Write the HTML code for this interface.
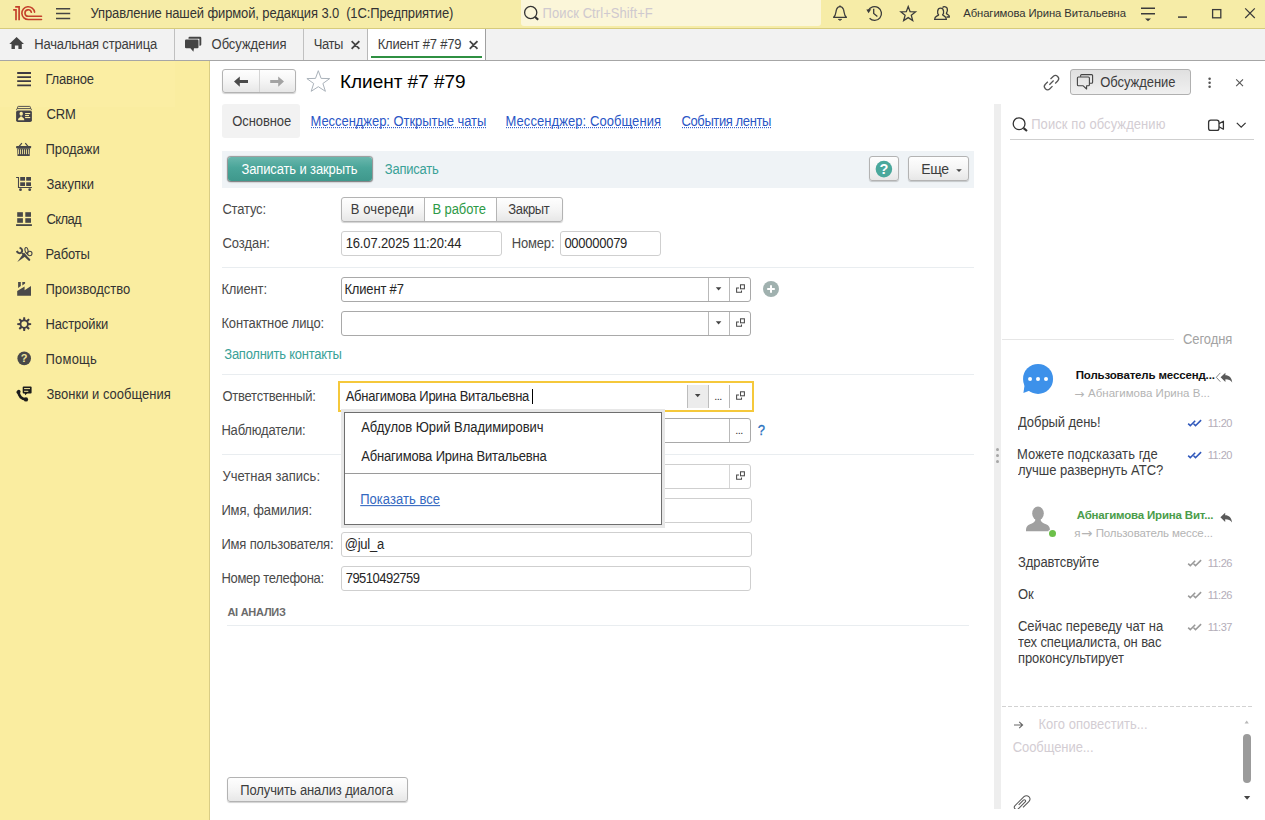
<!DOCTYPE html>
<html lang="ru">
<head>
<meta charset="utf-8">
<title>Клиент #7 #79</title>
<style>
*{box-sizing:border-box;margin:0;padding:0}
html,body{width:1265px;height:820px;overflow:hidden;background:#fff}
body{font-family:"Liberation Sans",sans-serif;font-size:13.5px;color:#333;position:relative}
.abs{position:absolute}
.t{position:absolute;white-space:nowrap}
svg{position:absolute;overflow:visible}
#top{position:absolute;left:0;top:0;width:1265px;height:29px;background:#f6eca7;border-bottom:1px solid #d6cb7c}
#search{position:absolute;left:521px;top:0;width:300px;height:26px;background:#fbf6d9;border-radius:0 0 3px 3px}
#tabs{position:absolute;left:0;top:29px;width:1265px;height:32px;background:#f2f2f2;border-bottom:1px solid #a6a6a6}
.sep{position:absolute;top:29px;width:1px;height:31px;background:#c0c0c0}
#side{position:absolute;left:0;top:61px;width:210px;height:759px;background:#faeda0;border-right:1px solid #d9cd85}
.inp{position:absolute;height:25px;border:1px solid #cfcfcf;border-radius:3px;background:#fff}
.inp.dk{border-color:#a9a9a9}
.hr{position:absolute;left:222px;width:752px;height:1px;background:#e9edf0}
.btn{position:absolute;border:1px solid #b3b3b3;border-radius:3px;background:linear-gradient(#fefefe,#f5f5f5 50%,#e7e7e7);box-shadow:0 1px 1px rgba(0,0,0,.18)}
.vl{position:absolute;width:1px;height:23px;background:#b9b9b9}
.dot{width:3px;height:3px;background:#a6a6a6;border-radius:1.5px}
.lnk{border-bottom:1px dotted #2a56c6;height:14px}
</style>
</head>
<body>
<div id="top"></div><div id="search"></div>
<div class="t" style="left:90.50px;top:6.00px;font-size:13px;line-height:15px;color:#333;letter-spacing:-0.112px;transform:scaleY(1.075);transform-origin:0 12px;">Управление нашей фирмой, редакция 3.0&nbsp; (1С:Предприятие)</div><div class="t" style="left:542.60px;top:6.00px;font-size:13px;line-height:15px;color:#cfc9cf;letter-spacing:0.068px;transform:scaleY(1.075);transform-origin:0 12px;">Поиск Ctrl+Shift+F</div><div class="t" style="left:963.20px;top:7.00px;font-size:11.3px;line-height:12px;color:#333;letter-spacing:-0.090px;">Абнагимова Ирина Витальевна</div>
<div id="tabs"></div>
<div class="sep" style="left:174px"></div>
<div class="sep" style="left:303px"></div>
<div class="abs" style="left:367px;top:29px;width:119px;height:31px;background:#fff;border-left:1px solid #b8b8b8;border-right:1px solid #a0a0a0"></div>
<div class="abs" style="left:371px;top:56px;width:111px;height:2px;background:#2f9042"></div>
<div class="t" style="left:34.20px;top:37.00px;font-size:13px;line-height:15px;color:#3d3d3d;letter-spacing:-0.162px;transform:scaleY(1.075);transform-origin:0 12px;">Начальная страница</div><div class="t" style="left:211.60px;top:37.00px;font-size:13px;line-height:15px;color:#3d3d3d;letter-spacing:-0.068px;transform:scaleY(1.075);transform-origin:0 12px;">Обсуждения</div><div class="t" style="left:313.70px;top:37.00px;font-size:13px;line-height:15px;color:#3d3d3d;letter-spacing:-0.388px;transform:scaleY(1.075);transform-origin:0 12px;">Чаты</div><div class="t" style="left:377.70px;top:37.00px;font-size:13px;line-height:15px;color:#3d3d3d;letter-spacing:-0.202px;transform:scaleY(1.075);transform-origin:0 12px;">Клиент #7 #79</div>
<div id="side"></div>
<div class="abs" style="left:0;top:61px;width:175px;height:46px;background:#fbeea3"></div>
<div class="t" style="left:45.50px;top:72.00px;font-size:13px;line-height:15px;color:#333;letter-spacing:-0.207px;transform:scaleY(1.075);transform-origin:0 12px;">Главное</div><div class="t" style="left:46.50px;top:107.00px;font-size:13px;line-height:15px;color:#333;letter-spacing:-0.138px;transform:scaleY(1.075);transform-origin:0 12px;">CRM</div><div class="t" style="left:45.50px;top:142.00px;font-size:13px;line-height:15px;color:#333;transform:scaleY(1.075);transform-origin:0 12px;">Продажи</div><div class="t" style="left:46.50px;top:177.00px;font-size:13px;line-height:15px;color:#333;letter-spacing:0.010px;transform:scaleY(1.075);transform-origin:0 12px;">Закупки</div><div class="t" style="left:46.50px;top:212.00px;font-size:13px;line-height:15px;color:#333;letter-spacing:-0.634px;transform:scaleY(1.075);transform-origin:0 12px;">Склад</div><div class="t" style="left:45.50px;top:247.00px;font-size:13px;line-height:15px;color:#333;letter-spacing:-0.163px;transform:scaleY(1.075);transform-origin:0 12px;">Работы</div><div class="t" style="left:45.50px;top:282.00px;font-size:13px;line-height:15px;color:#333;transform:scaleY(1.075);transform-origin:0 12px;">Производство</div><div class="t" style="left:45.50px;top:317.00px;font-size:13px;line-height:15px;color:#333;letter-spacing:-0.123px;transform:scaleY(1.075);transform-origin:0 12px;">Настройки</div><div class="t" style="left:45.50px;top:352.00px;font-size:13px;line-height:15px;color:#333;letter-spacing:0.213px;transform:scaleY(1.075);transform-origin:0 12px;">Помощь</div><div class="t" style="left:46.50px;top:387.00px;font-size:13px;line-height:15px;color:#333;transform:scaleY(1.075);transform-origin:0 12px;">Звонки и сообщения</div>

<div class="btn" style="left:222px;top:69px;width:74px;height:24px"></div>
<div class="abs" style="left:259px;top:70px;width:1px;height:22px;background:#d4d4d4"></div>
<div class="abs" style="left:222px;top:104px;width:78px;height:34px;background:#f2f2f2;border-radius:3px"></div>
<div class="abs" style="left:222px;top:151px;width:752px;height:37px;background:#eff3f6"></div>
<div class="abs" style="left:228px;top:157px;width:144px;height:24px;border-radius:3px;background:linear-gradient(#6ab7ad,#4aa599 45%,#3f988c);box-shadow:0 0 1px 0.5px rgba(80,80,80,.55),0 1px 2px rgba(0,0,0,.3)"></div>
<div class="btn" style="left:869px;top:156px;width:30px;height:25px"></div>
<div class="btn" style="left:908px;top:156px;width:61px;height:25px"></div>
<div class="btn" style="left:341px;top:197px;width:222px;height:25px"></div>
<div class="abs" style="left:424px;top:198px;width:73px;height:23px;background:#fff;border-left:1px solid #b5b5b5;border-right:1px solid #b5b5b5"></div>
<div class="inp" style="left:341px;top:231px;width:161px"></div>
<div class="inp" style="left:560px;top:231px;width:101px"></div>
<div class="hr" style="top:267px"></div>
<div class="inp dk" style="left:341px;top:277px;width:410px"></div>
<div class="vl" style="left:708px;top:278px"></div><div class="vl" style="left:729px;top:278px"></div>
<div class="inp dk" style="left:341px;top:311px;width:410px"></div>
<div class="vl" style="left:708px;top:312px"></div><div class="vl" style="left:729px;top:312px"></div>
<div class="hr" style="top:374px"></div>
<div class="abs" style="left:338px;top:381px;width:416px;height:31px;border:2px solid #f5c83b;background:#fff"></div>
<div class="abs" style="left:687px;top:385px;width:22px;height:23px;background:#ececec;border-left:1px solid #bdbdbd;border-right:1px solid #bdbdbd"></div>
<div class="vl" style="left:729px;top:385px;height:23px"></div>
<div class="abs" style="left:532px;top:389px;width:1px;height:15px;background:#000"></div>
<div class="inp dk" style="left:341px;top:418px;width:410px"></div>
<div class="vl" style="left:729px;top:419px"></div>
<div class="hr" style="top:454px"></div>
<div class="inp" style="left:341px;top:464px;width:410px"></div>
<div class="vl" style="left:729px;top:465px;background:#d6d6d6"></div>
<div class="inp" style="left:341px;top:498px;width:411px"></div>
<div class="inp" style="left:341px;top:532px;width:411px"></div>
<div class="inp" style="left:341px;top:566px;width:410px"></div>
<div class="abs" style="left:227px;top:625px;width:742px;height:1px;background:#e9edf0"></div>
<div class="btn" style="left:227px;top:777px;width:181px;height:25px"></div>
<div class="t" style="left:340.00px;top:71.00px;font-size:19px;line-height:21px;color:#000;letter-spacing:-0.030px;">Клиент #7 #79</div><div class="t" style="left:232.30px;top:114.00px;font-size:13px;line-height:15px;color:#3d3d3d;letter-spacing:-0.091px;transform:scaleY(1.075);transform-origin:0 12px;">Основное</div><div class="t lnk" style="left:310.50px;top:114.00px;font-size:13px;line-height:15px;color:#2a56c6;letter-spacing:-0.051px;transform:scaleY(1.075);transform-origin:0 12px;">Мессенджер: Открытые чаты</div><div class="t lnk" style="left:505.50px;top:114.00px;font-size:13px;line-height:15px;color:#2a56c6;letter-spacing:0.070px;transform:scaleY(1.075);transform-origin:0 12px;">Мессенджер: Сообщения</div><div class="t lnk" style="left:681.50px;top:114.00px;font-size:13px;line-height:15px;color:#2a56c6;letter-spacing:-0.394px;transform:scaleY(1.075);transform-origin:0 12px;">События ленты</div><div class="t" style="left:241.50px;top:162.00px;font-size:13px;line-height:15px;color:#fff;letter-spacing:-0.132px;transform:scaleY(1.075);transform-origin:0 12px;">Записать и закрыть</div><div class="t" style="left:384.80px;top:162.00px;font-size:13px;line-height:15px;color:#3aa197;letter-spacing:-0.226px;transform:scaleY(1.075);transform-origin:0 12px;">Записать</div><div class="t" style="left:921.30px;top:161.00px;font-size:14px;line-height:16px;color:#3d3d3d;letter-spacing:-0.400px;">Еще</div><div class="t" style="left:222.40px;top:202.00px;font-size:13px;line-height:15px;color:#4a4a4a;letter-spacing:-0.182px;transform:scaleY(1.075);transform-origin:0 12px;">Статус:</div><div class="t" style="left:350.70px;top:202.00px;font-size:13px;line-height:15px;color:#3d3d3d;letter-spacing:0.139px;transform:scaleY(1.075);transform-origin:0 12px;">В очереди</div><div class="t" style="left:432.50px;top:202.00px;font-size:13px;line-height:15px;color:#2e9a47;letter-spacing:-0.092px;transform:scaleY(1.075);transform-origin:0 12px;">В работе</div><div class="t" style="left:508.30px;top:202.00px;font-size:13px;line-height:15px;color:#3d3d3d;letter-spacing:-0.369px;transform:scaleY(1.075);transform-origin:0 12px;">Закрыт</div><div class="t" style="left:222.40px;top:236.00px;font-size:13px;line-height:15px;color:#4a4a4a;letter-spacing:-0.040px;transform:scaleY(1.075);transform-origin:0 12px;">Создан:</div><div class="t" style="left:345.70px;top:236.00px;font-size:13px;line-height:15px;color:#262626;letter-spacing:-0.138px;transform:scaleY(1.075);transform-origin:0 12px;">16.07.2025 11:20:44</div><div class="t" style="left:511.70px;top:236.00px;font-size:13px;line-height:15px;color:#4a4a4a;letter-spacing:-0.163px;transform:scaleY(1.075);transform-origin:0 12px;">Номер:</div><div class="t" style="left:564.40px;top:236.00px;font-size:13px;line-height:15px;color:#262626;letter-spacing:-0.267px;transform:scaleY(1.075);transform-origin:0 12px;">000000079</div><div class="t" style="left:221.40px;top:282.00px;font-size:13px;line-height:15px;color:#4a4a4a;letter-spacing:-0.131px;transform:scaleY(1.075);transform-origin:0 12px;">Клиент:</div><div class="t" style="left:344.40px;top:282.00px;font-size:13px;line-height:15px;color:#262626;letter-spacing:-0.166px;transform:scaleY(1.075);transform-origin:0 12px;">Клиент #7</div><div class="t" style="left:221.40px;top:316.00px;font-size:13px;line-height:15px;color:#4a4a4a;letter-spacing:-0.156px;transform:scaleY(1.075);transform-origin:0 12px;">Контактное лицо:</div><div class="t" style="left:224.30px;top:347.00px;font-size:13px;line-height:15px;color:#3aa197;letter-spacing:-0.253px;transform:scaleY(1.075);transform-origin:0 12px;">Заполнить контакты</div><div class="t" style="left:222.40px;top:389.00px;font-size:13px;line-height:15px;color:#4a4a4a;letter-spacing:-0.234px;transform:scaleY(1.075);transform-origin:0 12px;">Ответственный:</div><div class="t" style="left:345.70px;top:389.00px;font-size:13px;line-height:15px;color:#262626;letter-spacing:-0.246px;transform:scaleY(1.075);transform-origin:0 12px;">Абнагимова Ирина Витальевна</div><div class="t" style="left:221.40px;top:423.00px;font-size:13px;line-height:15px;color:#4a4a4a;letter-spacing:-0.174px;transform:scaleY(1.075);transform-origin:0 12px;">Наблюдатели:</div><div class="t" style="left:757.80px;top:423.00px;font-size:13px;line-height:15px;color:#2a72c0;transform:scaleY(1.075);transform-origin:0 12px;-webkit-text-stroke:0.3px #2a72c0;">?</div><div class="t" style="left:222.40px;top:469.00px;font-size:13px;line-height:15px;color:#4a4a4a;letter-spacing:0.028px;transform:scaleY(1.075);transform-origin:0 12px;">Учетная запись:</div><div class="t" style="left:221.40px;top:503.00px;font-size:13px;line-height:15px;color:#4a4a4a;letter-spacing:-0.130px;transform:scaleY(1.075);transform-origin:0 12px;">Имя, фамилия:</div><div class="t" style="left:221.40px;top:537.00px;font-size:13px;line-height:15px;color:#4a4a4a;letter-spacing:-0.166px;transform:scaleY(1.075);transform-origin:0 12px;">Имя пользователя:</div><div class="t" style="left:344.70px;top:537.00px;font-size:13px;line-height:15px;color:#262626;letter-spacing:-0.227px;transform:scaleY(1.075);transform-origin:0 12px;">@jul_a</div><div class="t" style="left:221.40px;top:571.00px;font-size:13px;line-height:15px;color:#4a4a4a;letter-spacing:-0.306px;transform:scaleY(1.075);transform-origin:0 12px;">Номер телефона:</div><div class="t" style="left:345.70px;top:571.00px;font-size:13px;line-height:15px;color:#262626;letter-spacing:-0.520px;transform:scaleY(1.075);transform-origin:0 12px;">79510492759</div><div class="t" style="left:227.40px;top:606.00px;font-size:11px;line-height:12px;color:#6b6b6b;letter-spacing:-0.256px;font-weight:bold;">AI АНАЛИЗ</div><div class="t" style="left:240.30px;top:783.00px;font-size:13px;line-height:15px;color:#3d3d3d;letter-spacing:-0.123px;transform:scaleY(1.075);transform-origin:0 12px;">Получить анализ диалога</div><div class="t" style="left:714.30px;top:390.00px;font-size:11px;line-height:12px;color:#333;letter-spacing:-0.556px;">...</div><div class="t" style="left:735.30px;top:424.00px;font-size:11px;line-height:12px;color:#333;letter-spacing:-0.556px;">...</div><div class="abs" style="left:344px;top:412px;width:318px;height:113px;background:#fff;border:1px solid #6e6e6e;box-shadow:0 0 0 3px #e7e7e7"></div>
<div class="abs" style="left:345px;top:473px;width:316px;height:1px;background:#9a9a9a"></div>
<div class="t" style="left:361.20px;top:420.00px;font-size:13px;line-height:15px;color:#262626;letter-spacing:-0.036px;transform:scaleY(1.075);transform-origin:0 12px;">Абдулов Юрий Владимирович</div><div class="t" style="left:361.20px;top:449.00px;font-size:13px;line-height:15px;color:#262626;letter-spacing:-0.169px;transform:scaleY(1.075);transform-origin:0 12px;">Абнагимова Ирина Витальевна</div><div class="t" style="left:360.20px;top:492.00px;font-size:13px;line-height:15px;color:#3468c0;letter-spacing:0.042px;transform:scaleY(1.075);transform-origin:0 12px;text-decoration:underline;">Показать все</div>

<div class="abs" style="left:994px;top:104px;width:7px;height:705px;background:#eeeeee"></div>
<div class="abs dot" style="left:996px;top:448px"></div><div class="abs dot" style="left:996px;top:454px"></div><div class="abs dot" style="left:996px;top:460px"></div>
<div class="btn" style="left:1070px;top:69px;width:121px;height:26px;background:linear-gradient(#e0e0e0,#f0f0f0);border-color:#b0b0b0;box-shadow:none"></div>
<div class="abs" style="left:1010px;top:139px;width:244px;height:1px;background:#cfcfcf"></div>
<div class="abs" style="left:1002px;top:339px;width:172px;height:1px;background:#e6e6e6"></div>
<div class="abs" style="left:1002px;top:706px;width:250px;height:1px;background:repeating-linear-gradient(90deg,#d2d2d2 0,#d2d2d2 4px,transparent 4px,transparent 6px)"></div>
<div class="abs" style="left:1243px;top:734px;width:8px;height:49px;border-radius:4px;background:#9b9b9b"></div>
<div class="t" style="left:1100.20px;top:75.00px;font-size:13px;line-height:15px;color:#3d3d3d;letter-spacing:-0.046px;transform:scaleY(1.075);transform-origin:0 12px;">Обсуждение</div><div class="t" style="left:1031.20px;top:117.00px;font-size:13px;line-height:15px;color:#d3cdd3;letter-spacing:0.075px;transform:scaleY(1.075);transform-origin:0 12px;">Поиск по обсуждению</div><div class="t" style="left:1183.10px;top:332.00px;font-size:13px;line-height:15px;color:#a3a3a3;letter-spacing:-0.114px;transform:scaleY(1.075);transform-origin:0 12px;">Сегодня</div><div class="t" style="left:1075.70px;top:369.00px;font-size:11.5px;line-height:12px;color:#111;letter-spacing:-0.151px;font-weight:bold;">Пользователь мессенд...</div><div class="t" style="left:1074.30px;top:387.00px;font-size:12px;line-height:14px;color:#b4b4b4;font-family:'DejaVu Sans',sans-serif;">→</div><div class="t" style="left:1088.00px;top:387.00px;font-size:11.5px;line-height:12px;color:#b4b4b4;letter-spacing:0.011px;">Абнагимова Ирина В...</div><div class="t" style="left:1018.00px;top:415.00px;font-size:13px;line-height:15px;color:#3d3d3d;letter-spacing:-0.076px;transform:scaleY(1.075);transform-origin:0 12px;">Добрый день!</div><div class="t" style="left:1207.80px;top:417.00px;font-size:11px;line-height:12px;color:#b3adb8;letter-spacing:-0.548px;">11:20</div><div class="t" style="left:1017.00px;top:447.00px;font-size:13px;line-height:15px;color:#3d3d3d;letter-spacing:0.059px;transform:scaleY(1.075);transform-origin:0 12px;">Можете подсказать где</div><div class="t" style="left:1018.00px;top:463.00px;font-size:13px;line-height:15px;color:#3d3d3d;letter-spacing:-0.031px;transform:scaleY(1.075);transform-origin:0 12px;">лучше развернуть АТС?</div><div class="t" style="left:1207.80px;top:449.00px;font-size:11px;line-height:12px;color:#b3adb8;letter-spacing:-0.548px;">11:20</div><div class="t" style="left:1076.70px;top:509.00px;font-size:11.5px;line-height:12px;color:#4a9c4a;letter-spacing:-0.183px;font-weight:bold;">Абнагимова Ирина Вит...</div><div class="t" style="left:1074.30px;top:527.00px;font-size:11.5px;line-height:12px;color:#b4b4b4;">я</div><div class="t" style="left:1081.00px;top:526.00px;font-size:13.5px;line-height:15px;color:#b4b4b4;font-family:'DejaVu Sans',sans-serif;">→</div><div class="t" style="left:1095.70px;top:527.00px;font-size:11.5px;line-height:12px;color:#b4b4b4;letter-spacing:-0.115px;">Пользователь мессе...</div><div class="t" style="left:1018.00px;top:555.00px;font-size:13px;line-height:15px;color:#3d3d3d;letter-spacing:-0.092px;transform:scaleY(1.075);transform-origin:0 12px;">Здравтсвуйте</div><div class="t" style="left:1207.80px;top:557.00px;font-size:11px;line-height:12px;color:#b3adb8;letter-spacing:-0.548px;">11:26</div><div class="t" style="left:1018.00px;top:587.00px;font-size:13px;line-height:15px;color:#3d3d3d;letter-spacing:-0.112px;transform:scaleY(1.075);transform-origin:0 12px;">Ок</div><div class="t" style="left:1207.80px;top:589.00px;font-size:11px;line-height:12px;color:#b3adb8;letter-spacing:-0.548px;">11:26</div><div class="t" style="left:1018.00px;top:619.00px;font-size:13px;line-height:15px;color:#3d3d3d;letter-spacing:-0.028px;transform:scaleY(1.075);transform-origin:0 12px;">Сейчас переведу чат на</div><div class="t" style="left:1018.00px;top:635.00px;font-size:13px;line-height:15px;color:#3d3d3d;letter-spacing:-0.100px;transform:scaleY(1.075);transform-origin:0 12px;">тех специалиста, он вас</div><div class="t" style="left:1018.00px;top:651.00px;font-size:13px;line-height:15px;color:#3d3d3d;letter-spacing:-0.083px;transform:scaleY(1.075);transform-origin:0 12px;">проконсультирует</div><div class="t" style="left:1207.80px;top:621.00px;font-size:11px;line-height:12px;color:#b3adb8;letter-spacing:-0.548px;">11:37</div><div class="t" style="left:1038.50px;top:717.00px;font-size:13px;line-height:15px;color:#d3cdd3;letter-spacing:0.014px;transform:scaleY(1.075);transform-origin:0 12px;">Кого оповестить...</div><div class="t" style="left:1012.70px;top:740.00px;font-size:13px;line-height:15px;color:#d3cdd3;letter-spacing:-0.070px;transform:scaleY(1.075);transform-origin:0 12px;">Сообщение...</div>
<svg id="ico" width="1265" height="820" viewBox="0 0 1265 820" style="left:0;top:0;pointer-events:none">
<!-- 1C logo -->
<g fill="none" stroke="#c4402b" stroke-width="1.6">
<path d="M13.2 9.9 H16 V20.2 M15.2 6.9 H19.1 V20.2" stroke-width="1.7"/>
<path d="M34.6 12.2 A6.4 6.4 0 1 0 28.4 19.5 H41.5" stroke-linecap="round"/>
<path d="M31.35 12.2 A3.25 3.25 0 1 0 28.25 16.3 H41.5" stroke-linecap="round"/>
</g>
<!-- hamburger -->
<g stroke="#444" stroke-width="1.5"><path d="M56 8.7H70.2M56 13.6H70.2M56 18.5H70.2"/></g>
<!-- search -->
<g fill="none" stroke="#333"><circle cx="530.7" cy="12.5" r="6.1" stroke-width="1.3"/><path d="M535.2 17 L538.2 19.8" stroke-width="2.2"/></g>
<!-- bell -->
<g fill="none" stroke="#3b3b3b" stroke-width="1.3" stroke-linejoin="round">
<path d="M833.6 17.3 C836.3 15.2 835.6 11.5 836.6 9.3 C837.3 7.6 838.8 6.6 840 6.6 C841.2 6.6 842.7 7.6 843.4 9.3 C844.4 11.5 843.7 15.2 846.4 17.3 Z"/>
<path d="M838.2 19.3 Q840 21.6 841.8 19.3 Z" fill="#3b3b3b" stroke-width="0.6"/><path d="M840 5.5 V6.8" stroke-width="1.4"/>
</g>
<!-- history -->
<g fill="none" stroke="#3b3b3b" stroke-width="1.3">
<path d="M868.3 10.6 A6.9 6.9 0 1 1 869.6 18.3"/>
<path d="M873.7 8.8 V13.5 L877.4 16.4"/>
<path d="M866.3 9.6 L871.2 9.2 L868.6 13.2 Z" fill="#3b3b3b" stroke="none"/>
</g>
<!-- star -->
<path d="M908.2 6.6 L910.1 11.7 L915.5 11.9 L911.3 15.3 L912.7 20.5 L908.2 17.6 L903.7 20.5 L905.1 15.3 L900.9 11.9 L906.3 11.7 Z" fill="none" stroke="#3b3b3b" stroke-width="1.3" stroke-linejoin="miter"/>
<!-- users -->
<g fill="none" stroke="#3b3b3b" stroke-width="1.3" stroke-linejoin="round">
<path d="M934.6 19.4 C934.6 16.2 937.6 16.2 938.6 14.8 C937.2 13.6 936.8 8.2 940.6 8.2 C944.4 8.2 944 13.6 942.6 14.8 C943.6 16.2 946.4 16.2 946.4 19.4 Z"/>
<path d="M942.6 7.6 C943.3 6.4 947.6 5.8 947.4 10.2 C947.3 11.8 946.6 12.6 946.4 13.2 C946.9 14.8 949.4 14.4 949.4 17 H946.6"/>
</g>
<!-- menu -->
<g stroke="#3b3b3b" stroke-width="1.4"><path d="M1141 8.3H1155M1141 13.7H1155"/></g>
<path d="M1145 18.4H1151L1148 21.3Z" fill="#3b3b3b"/>
<path d="M1178 17.1H1187" stroke="#3b3b3b" stroke-width="1.5"/>
<rect x="1212.6" y="9.6" width="8.2" height="8.2" fill="none" stroke="#3b3b3b" stroke-width="1.3"/>
<path d="M1245.2 8.4L1254.8 18M1254.8 8.4L1245.2 18" stroke="#3b3b3b" stroke-width="1.2"/>
<!-- sidebar icons -->
<g stroke="#3e3a42" stroke-width="1.8"><path d="M17.2 73H31M17.2 77.1H31M17.2 81.2H31M17.2 85.3H31"/></g>
<!-- crm -->
<g fill="none" stroke="#434248" stroke-width="0.9"><path d="M17.6 108.6 V107.2 Q17.6 106.4 18.4 106.4 H29.6 Q30.4 106.4 30.4 107.2 V108.6"/><path d="M16.6 110.2 V109.4 Q16.6 108.6 17.4 108.6 H30.6 Q31.4 108.6 31.4 109.4 V110.2"/></g>
<rect x="16.1" y="110.4" width="15.8" height="11.7" rx="1.8" fill="#434248"/>
<g fill="#faeda0"><ellipse cx="21.2" cy="113.8" rx="1.7" ry="2"/><path d="M18.1 120.2 C18.1 117.6 20 117.8 20.4 116.4 H22 C22.4 117.8 24.3 117.6 24.3 120.2 Z"/><rect x="25.1" y="113" width="5.1" height="1.1"/><rect x="25.1" y="115" width="3.9" height="1.1"/><rect x="25.1" y="117" width="5.1" height="1.1"/></g>
<!-- basket -->
<g fill="#46464a"><rect x="16.1" y="146.1" width="15" height="2.2" rx="0.4"/><path d="M17.2 148.2 H30 L29.7 156 H17.5 Z"/></g>
<g stroke="#46464a" stroke-width="1.2"><path d="M19.1 146.4 L21.9 143.1 M28 146.4 L25.3 143.1"/></g>
<g stroke="#dcd190" stroke-width="1"><path d="M18.5 149.3V154.2M20.5 149.3V154.2M22.5 149.3V154.2M24.5 149.3V154.2M26.5 149.3V154.2M28.6 149.3V154.2"/></g>
<!-- cart -->
<g fill="#46464a"><rect x="20.2" y="177" width="4.8" height="3.7"/><rect x="26.2" y="177" width="4.8" height="3.7"/><rect x="20.2" y="182.3" width="4.8" height="3.7"/><rect x="26.2" y="182.3" width="4.8" height="3.7"/><circle cx="20.5" cy="189.7" r="1.4"/><circle cx="29.7" cy="189.7" r="1.4"/></g>
<path d="M16.1 177.5 H18.5 V187.5 H31.9" fill="none" stroke="#46464a" stroke-width="1.1"/>
<!-- sklad -->
<g fill="#484848"><rect x="17.2" y="212.2" width="5.7" height="4.6"/><rect x="25.3" y="212.2" width="5.7" height="4.6"/><rect x="17.2" y="218.2" width="5.7" height="4.6"/><rect x="25.3" y="218.2" width="5.7" height="4.6"/><rect x="16.1" y="224.2" width="15.8" height="1.8"/></g>
<!-- raboty -->
<g fill="none" stroke="#46464a">
<path d="M19.6 247.6 C22.6 248.6 23 251.6 20.8 253 C19.4 253.8 17.6 252.8 16.8 251" stroke-width="2"/>
<path d="M25.6 256.2 L29.2 259.8" stroke-width="2.2" stroke-linecap="round"/>
<ellipse cx="26.5" cy="250.3" rx="1.5" ry="2.8" stroke-width="1.1" transform="rotate(-12 26.5 250.3)"/>
<circle cx="29.8" cy="253.5" r="2.2" stroke-width="1.1"/>
</g>
<path d="M24 252.6 L26.7 255.6 L17.3 262 Z" fill="#46464a"/>
<path d="M22 253 L25 256" stroke="#46464a" stroke-width="1.6"/>
<path d="M26.2 253 L28 254.6" stroke="#46464a" stroke-width="1.1"/>
<!-- factory -->
<g fill="#4a4a4a"><path d="M17.2 295.8 V290.9 L24.6 286.5 V290.3 L31 286.1 V295.8 Z"/><path d="M18.1 282 H20.8 V286.1 L18.1 287.9 Z"/><path d="M22.3 282 H25.1 V283.6 L22.3 285.5 Z"/></g>
<!-- gear -->
<path d="M23.02 320.28 L23.29 317.16 L25.11 317.16 L25.38 320.28 Z M26.07 320.56 L28.47 318.55 L29.75 319.83 L27.74 322.23 Z M28.02 322.92 L31.14 323.19 L31.14 325.01 L28.02 325.28 Z M27.74 325.97 L29.75 328.37 L28.47 329.65 L26.07 327.64 Z M25.38 327.92 L25.11 331.04 L23.29 331.04 L23.02 327.92 Z M22.33 327.64 L19.93 329.65 L18.65 328.37 L20.66 325.97 Z M20.38 325.28 L17.26 325.01 L17.26 323.19 L20.38 322.92 Z M20.66 322.23 L18.65 319.83 L19.93 318.55 L22.33 320.56 Z " fill="#423e46"/>
<circle cx="24.2" cy="324.1" r="3.7" fill="none" stroke="#423e46" stroke-width="1.8"/>
<!-- help -->
<circle cx="24.2" cy="358.4" r="6.8" fill="#484848"/>
<text x="24.2" y="362.3" font-family="Liberation Sans, sans-serif" font-weight="bold" font-size="11" text-anchor="middle" fill="#f0e49c">?</text>
<!-- phone -->
<g fill="#1c1c1c"><rect x="22.7" y="386.5" width="8.9" height="7" rx="1"/><path d="M24.6 393 L25.3 395.2 L27.4 393 Z"/></g>
<g stroke="#faeda0" stroke-width="1"><path d="M24.1 388.6H30M24.1 391.3H28.3"/></g>
<path d="M18.6 392 C18.6 396.2 21.8 399.3 26 399.3" fill="none" stroke="#1c1c1c" stroke-width="2.7"/>
<g fill="#1c1c1c"><ellipse cx="18.5" cy="391.9" rx="2.2" ry="1.9" transform="rotate(-40 18.5 391.9)"/><ellipse cx="26" cy="399.4" rx="2.1" ry="2.2"/></g>
<!-- home -->
<path d="M16.6 37 L24 44 H21.8 V49 H18.4 V45.5 H14.9 V49 H11.5 V44 H9.3 Z" fill="#444"/>

<!-- nav arrows -->
<path d="M234 81.5 L239.8 76.4 V80 H248 V83 H239.8 V86.7 Z" fill="#4a4a4a"/>
<path d="M284 81.5 L278.2 76.4 V80 H270.2 V83 H278.2 V86.7 Z" fill="#a3a3a3"/>
<!-- title star -->
<path d="M318.3 70.7 L321.1 78.4 L329.7 78.6 L322.9 83.5 L325.4 91.3 L318.3 86.7 L311.2 91.3 L313.7 83.5 L306.9 78.6 L315.5 78.4 Z" fill="none" stroke="#aab2ba" stroke-width="1"/>
<!-- help btn -->
<circle cx="883.9" cy="169.1" r="8.3" fill="#4aa89c"/>
<text x="883.9" y="174.3" font-family="Liberation Sans, sans-serif" font-weight="bold" font-size="14.5" text-anchor="middle" fill="#fff">?</text>
<path d="M956.2 169.3 H961.8 L959.0 172.1 Z" fill="#444"/>
<path d="M715.8 287.2 H721.4 L718.6 290.4 Z" fill="#444"/><path d="M715.8 321.2 H721.4 L718.6 324.4 Z" fill="#444"/><path d="M694.9 394.0 H700.5 L697.7 397.2 Z" fill="#444"/>
<g fill="none" stroke="#4a4a4a" stroke-width="1.05"><rect x="740.5" y="284.8" width="3.9" height="4"/><path d="M739.0 287.9 H736.6 V292.3 H741.5 V290.5"/></g><g fill="none" stroke="#4a4a4a" stroke-width="1.05"><rect x="740.5" y="318.8" width="3.9" height="4"/><path d="M739.0 321.9 H736.6 V326.3 H741.5 V324.5"/></g><g fill="none" stroke="#4a4a4a" stroke-width="1.05"><rect x="740.5" y="391.8" width="3.9" height="4"/><path d="M739.0 394.9 H736.6 V399.3 H741.5 V397.5"/></g><g fill="none" stroke="#4a4a4a" stroke-width="1.05"><rect x="740.5" y="471.8" width="3.9" height="4"/><path d="M739.0 474.9 H736.6 V479.3 H741.5 V477.5"/></g>
<circle cx="771" cy="289" r="8" fill="#a0b1af"/><path d="M767.2 289H774.8M771 285.2V292.8" stroke="#fff" stroke-width="2"/>
<g fill="none" stroke="#555" stroke-width="1.25" transform="translate(1051.5 82.6) rotate(-45)">
<path d="M1.8 -3.2 H5.5 A3.2 3.2 0 0 1 5.5 3.2 H2 M-1.8 3.2 H-5.5 A3.2 3.2 0 0 1 -5.5 -3.2 H-2 M-3 0 H3"/>
</g>
<g fill="none" stroke="#444" stroke-width="1.1" stroke-linejoin="round">
<path d="M1080.6 76.8 V75.6 Q1080.6 74.6 1081.6 74.6 H1091.6 Q1092.6 74.6 1092.6 75.6 V82.2 Q1092.6 83.2 1091.6 83.2 H1089.6"/>
<path d="M1078.4 77 H1088.4 Q1089.4 77 1089.4 78 V84.8 Q1089.4 85.8 1088.4 85.8 H1086.6 V89 L1083.2 85.8 H1078.4 Q1077.4 85.8 1077.4 84.8 V78 Q1077.4 77 1078.4 77 Z"/>
</g>
<g fill="#555"><circle cx="1209.6" cy="78.8" r="1.25"/><circle cx="1209.6" cy="82.8" r="1.25"/><circle cx="1209.6" cy="86.7" r="1.25"/></g>
<path d="M1236.2 79.4L1243 86.2M1243 79.4L1236.2 86.2" stroke="#555" stroke-width="1.1"/>
<!-- chat search -->
<g fill="none" stroke="#333"><circle cx="1019.1" cy="123.7" r="5.9" stroke-width="1.3"/><path d="M1023.6 128.2 L1027 131" stroke-width="2.2"/></g>
<g fill="none" stroke="#333" stroke-width="1.3" stroke-linejoin="round"><rect x="1208.6" y="120.2" width="10.4" height="10.2" rx="2.2"/><path d="M1219 123.6 L1223.4 121.2 V129.2 L1219 126.8"/></g>
<path d="M1236.8 122.8 L1241.2 127.2 L1245.6 122.8" fill="none" stroke="#333" stroke-width="1.2"/>
<!-- avatar 1 -->
<circle cx="1038.05" cy="378.9" r="15" fill="#3d91ea"/>
<path d="M1024.6 385 L1023.4 393 L1030.5 390.2 Z" fill="#3d91ea"/>
<g fill="#fff"><circle cx="1030.05" cy="379" r="2"/><circle cx="1038" cy="379" r="2"/><circle cx="1046" cy="379" r="2"/></g>
<!-- avatar 2 -->
<g fill="#a0a0a0"><ellipse cx="1038" cy="513.4" rx="5.8" ry="6.9"/>
<path d="M1035.4 519 H1040.6 C1040.6 522 1042.5 522.6 1046 524.2 C1049 525.6 1050 527 1050 531.3 H1026 C1026 527 1027 525.6 1030 524.2 C1033.5 522.6 1035.4 522 1035.4 519 Z"/></g>
<circle cx="1052.5" cy="533.5" r="4.6" fill="#fff"/><circle cx="1052.5" cy="533.5" r="3.5" fill="#6cc04a"/>
<path d="M1220.6 377.3 L1225.4 372.7 V375.3 C1229.1 375.3 1231.8 377.8 1232.2 382.5 C1230.8 380.1 1228.6 379.3 1225.4 379.3 V381.9 Z" fill="#5a5a5a"/><path d="M1220.3 372.9 L1216.3 377.3 L1220.3 381.7" fill="none" stroke="#777" stroke-width="0.9"/><path d="M1220.4 517.3 L1225.2 512.7 V515.3 C1228.9 515.3 1231.6 517.8 1232.0 522.5 C1230.6 520.1 1228.4 519.3 1225.2 519.3 V521.9 Z" fill="#5a5a5a"/>
<path d="M1188.2 423.6 l2.1 2.1 l4.9 -5 M1193.6 423.8 l1.9 1.9 l5.6 -5.6" fill="none" stroke="#3058bb" stroke-width="1.6"/><path d="M1188.2 455.6 l2.1 2.1 l4.9 -5 M1193.6 455.8 l1.9 1.9 l5.6 -5.6" fill="none" stroke="#3058bb" stroke-width="1.6"/><path d="M1188.2 563.6 l2.1 2.1 l4.9 -5 M1193.6 563.8 l1.9 1.9 l5.6 -5.6" fill="none" stroke="#999" stroke-width="1.6"/><path d="M1188.2 595.6 l2.1 2.1 l4.9 -5 M1193.6 595.8 l1.9 1.9 l5.6 -5.6" fill="none" stroke="#999" stroke-width="1.6"/><path d="M1188.2 627.6 l2.1 2.1 l4.9 -5 M1193.6 627.8 l1.9 1.9 l5.6 -5.6" fill="none" stroke="#999" stroke-width="1.6"/>
<!-- input area -->
<path d="M1014 725 H1022.6 M1019.2 721.8 L1022.6 725 L1019.2 728.2" fill="none" stroke="#666" stroke-width="1.1"/>
<path d="M1244.6 723.6 H1248.8 L1246.7 720.6 Z" fill="#b8b8b8"/>
<path d="M1244 796 H1250.2 L1247.1 799.8 Z" fill="#444"/>
<path transform="translate(1021.8 802.5) rotate(-45) scale(0.93)" d="M-2.8 4.6 L6.1 4.6 A3.7 3.7 0 0 0 6.1 -2.8 L-7.5 -2.8 A2.5 2.5 0 0 0 -7.5 2.2 L3 2.2 A1.4 1.4 0 0 0 3 -0.6 L-4.1 -0.6" fill="none" stroke="#555" stroke-width="1.1"/><rect x="1010" y="809" width="26" height="6" fill="#fff"/>

<!-- tab icons -->
<g fill="#444"><path d="M189.6 36.8 H200.2 Q201.3 36.8 201.3 37.9 V44.6 Q201.3 45.7 200.2 45.7 H199.4 V38.7 H188.5 V37.9 Q188.5 36.8 189.6 36.8 Z"/>
<path d="M186.1 39.6 H197.4 Q198.5 39.6 198.5 40.7 V47.2 Q198.5 48.3 197.4 48.3 H194 L193.4 51.7 L190.4 48.3 H186.1 Q185 48.3 185 47.2 V40.7 Q185 39.6 186.1 39.6 Z"/></g>
<path d="M352.3 41.8 L358.7 48.2 M358.7 41.8 L352.3 48.2 M470.4 41.8 L476.8 48.2 M476.8 41.8 L470.4 48.2" stroke="#444" stroke-width="1.8" stroke-linecap="square"/>
</svg>
</body>
</html>
